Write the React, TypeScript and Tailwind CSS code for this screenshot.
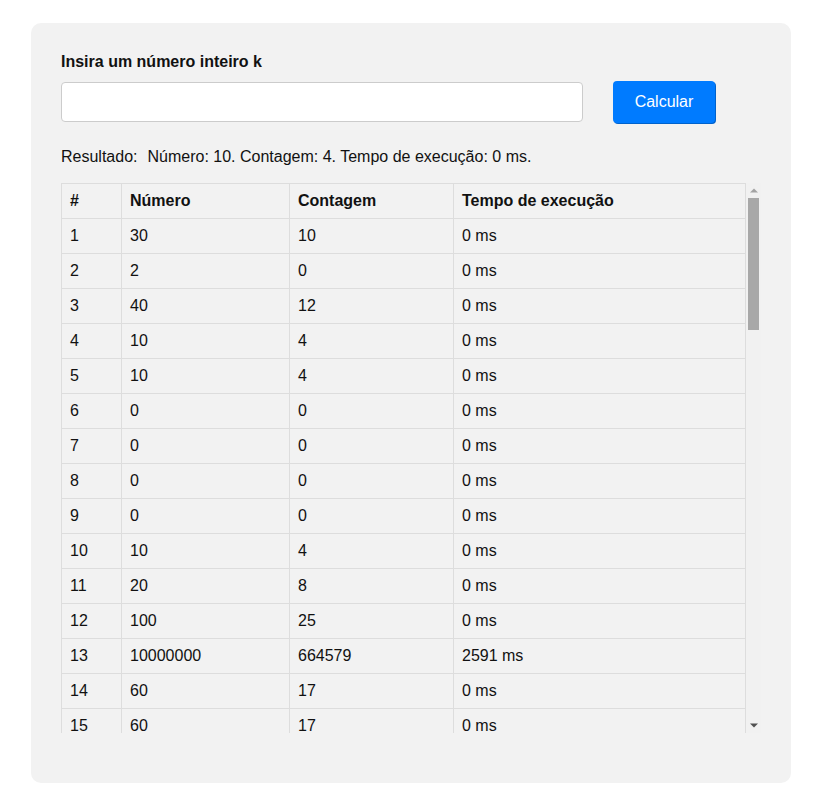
import { useState } from "react";

type Linha = { numero: number; contagem: number; tempo: number };

// historico das consultas (primos menores que k)
const historico: Linha[] = [
  { numero: 30, contagem: 10, tempo: 0 },
  { numero: 2, contagem: 0, tempo: 0 },
  { numero: 40, contagem: 12, tempo: 0 },
  { numero: 10, contagem: 4, tempo: 0 },
  { numero: 10, contagem: 4, tempo: 0 },
  { numero: 0, contagem: 0, tempo: 0 },
  { numero: 0, contagem: 0, tempo: 0 },
  { numero: 0, contagem: 0, tempo: 0 },
  { numero: 0, contagem: 0, tempo: 0 },
  { numero: 10, contagem: 4, tempo: 0 },
  { numero: 20, contagem: 8, tempo: 0 },
  { numero: 100, contagem: 25, tempo: 0 },
  { numero: 10000000, contagem: 664579, tempo: 2591 },
  { numero: 60, contagem: 17, tempo: 0 },
  { numero: 60, contagem: 17, tempo: 0 },
  { numero: 50, contagem: 15, tempo: 0 },
  { numero: 1000, contagem: 168, tempo: 0 },
  { numero: 1000, contagem: 168, tempo: 0 },
  { numero: 5, contagem: 2, tempo: 0 },
  { numero: 7, contagem: 3, tempo: 0 },
  { numero: 3, contagem: 1, tempo: 0 },
  { numero: 200, contagem: 46, tempo: 0 },
  { numero: 10000, contagem: 1229, tempo: 1 },
  { numero: 100000, contagem: 9592, tempo: 12 },
  { numero: 1000000, contagem: 78498, tempo: 187 },
  { numero: 500, contagem: 95, tempo: 0 },
  { numero: 15, contagem: 6, tempo: 0 },
  { numero: 25, contagem: 9, tempo: 0 },
  { numero: 30, contagem: 10, tempo: 0 },
  { numero: 0, contagem: 0, tempo: 0 },
  { numero: 1, contagem: 0, tempo: 0 },
  { numero: 11, contagem: 4, tempo: 0 },
  { numero: 12, contagem: 5, tempo: 0 },
  { numero: 13, contagem: 5, tempo: 0 },
  { numero: 14, contagem: 6, tempo: 0 },
  { numero: 70, contagem: 19, tempo: 0 },
  { numero: 80, contagem: 22, tempo: 0 },
  { numero: 90, contagem: 24, tempo: 0 },
  { numero: 300, contagem: 62, tempo: 0 },
  { numero: 400, contagem: 78, tempo: 0 },
  { numero: 2000, contagem: 303, tempo: 0 },
  { numero: 5000, contagem: 669, tempo: 1 },
  { numero: 50000, contagem: 5133, tempo: 6 },
  { numero: 10, contagem: 4, tempo: 0 },
  { numero: 20, contagem: 8, tempo: 0 },
  { numero: 40, contagem: 12, tempo: 0 },
  { numero: 60, contagem: 17, tempo: 0 },
  { numero: 100, contagem: 25, tempo: 0 },
  { numero: 8, contagem: 4, tempo: 0 },
  { numero: 9, contagem: 4, tempo: 0 },
  { numero: 4, contagem: 2, tempo: 0 },
  { numero: 6, contagem: 3, tempo: 0 },
  { numero: 150, contagem: 35, tempo: 0 },
  { numero: 250, contagem: 53, tempo: 0 },
  { numero: 750, contagem: 132, tempo: 0 },
  { numero: 3000, contagem: 430, tempo: 0 },
  { numero: 20000, contagem: 2262, tempo: 2 },
  { numero: 10, contagem: 4, tempo: 0 },
  { numero: 30, contagem: 10, tempo: 0 },
  { numero: 10, contagem: 4, tempo: 0 },
  { numero: 10, contagem: 4, tempo: 0 },
];

const cell = "border border-[#ddd] px-2 py-2 text-left leading-[18px]";

function Seta({ cima, cor }: { cima: boolean; cor: string }) {
  return (
    <div className="h-[15px] flex items-center justify-center">
      <svg width="8" height="5" viewBox="0 0 8 5">
        <polygon points={cima ? "4,0.5 8,4.5 0,4.5" : "0,0.5 8,0.5 4,4.5"} fill={cor} />
      </svg>
    </div>
  );
}

export default function App() {
  const [valor, setValor] = useState("");

  return (
    <div
      className="min-h-[802px] bg-white px-[31px] pt-[23px] text-[#111] text-base"
      style={{ fontFamily: '"Liberation Sans", Arial, sans-serif' }}
    >
      <div className="w-[760px] rounded-[10px] bg-[#f2f2f2] px-[30px] pt-[30px] pb-[50px]">
        {/* Formulario */}
        <label className="block font-bold leading-[18px] mb-[10px]">
          Insira um número inteiro k
        </label>
        <div className="flex items-center">
          <input
            type="number"
            value={valor}
            onChange={(e) => setValor(e.target.value)}
            className="w-[522px] h-[40px] rounded-[4px] border border-[#ccc] bg-white px-2 outline-none"
          />
          <button className="ml-[30px] h-[42px] w-[102px] rounded-[4px] bg-[#007bff] text-white shadow-[1px_1px_0_#0062cc] hover:bg-[#0069d9]">
            Calcular
          </button>
        </div>

        {/* Resultado */}
        <p className="mt-[25px] leading-[18px] flex gap-[10px]">
          <span>Resultado:</span>
          <span>Número: 10. Contagem: 4. Tempo de execução: 0 ms.</span>
        </p>

        {/* Tabela + barra de rolagem */}
        <div className="mt-[17px] h-[550px] flex">
          <div className="flex-1 overflow-hidden">
            <table className="w-full border-collapse">
              <thead>
                <tr>
                  <th className={`w-[60px] ${cell}`}>#</th>
                  <th className={`w-[168px] ${cell}`}>Número</th>
                  <th className={`w-[164px] ${cell}`}>Contagem</th>
                  <th className={cell}>Tempo de execução</th>
                </tr>
              </thead>
              <tbody>
                {historico.map((l, i) => (
                  <tr key={i}>
                    <td className={cell}>{i + 1}</td>
                    <td className={cell}>{l.numero}</td>
                    <td className={cell}>{l.contagem}</td>
                    <td className={cell}>{l.tempo} ms</td>
                  </tr>
                ))}
              </tbody>
            </table>
          </div>
          <div className="w-[15px] flex flex-col bg-[#f1f1f1]">
            <Seta cima cor="#a3a3a3" />
            <div className="flex-1 px-[2px]">
              <div className="h-[132px] bg-[#a8a8a8]" />
            </div>
            <Seta cima={false} cor="#505050" />
          </div>
        </div>
      </div>
    </div>
  );
}
